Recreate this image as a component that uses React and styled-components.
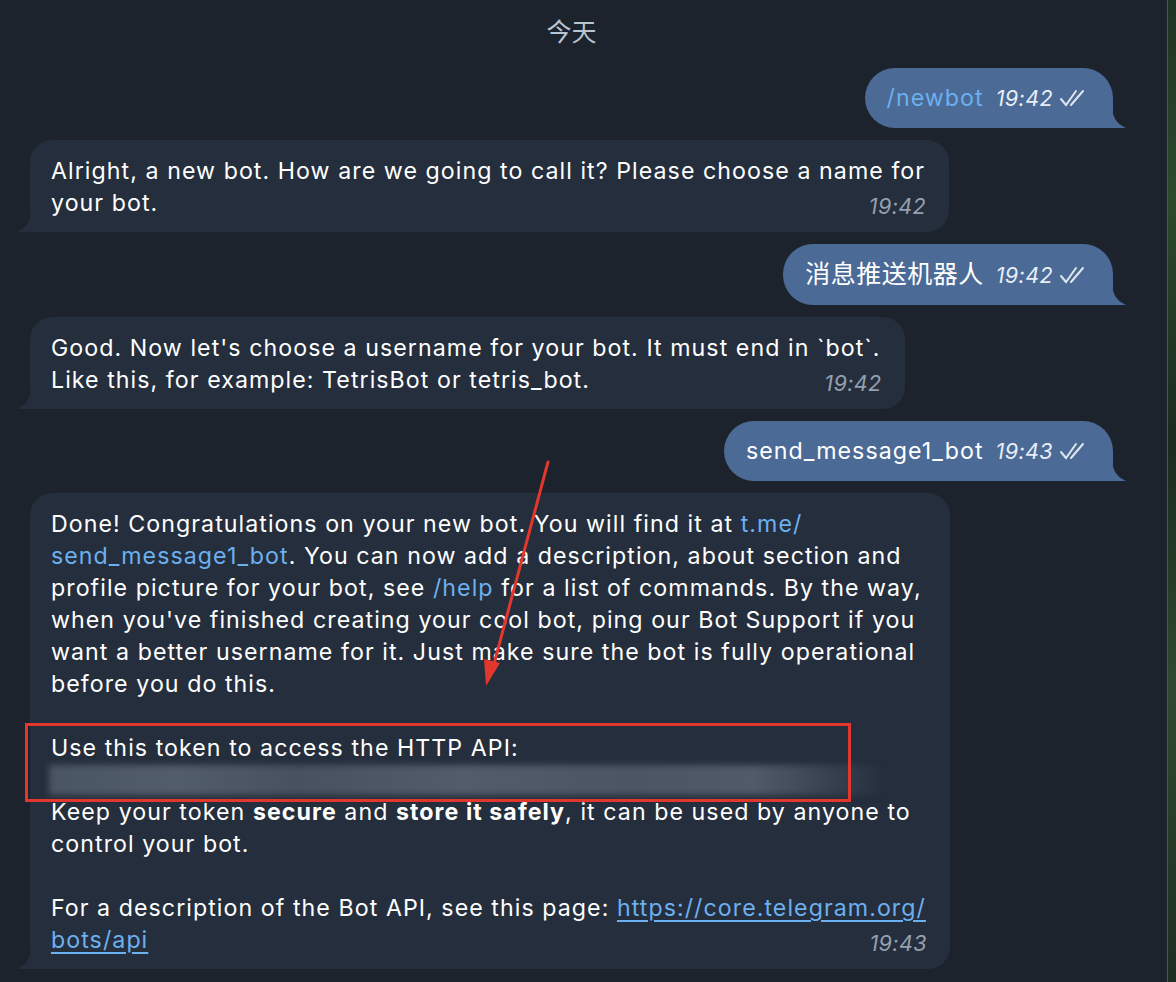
import React from 'react';
import styled, { createGlobalStyle } from 'styled-components';

const GlobalStyle = createGlobalStyle`
   html, body {
      margin: 0;
      padding: 0;
      background: #1d232d;
   }
   body {
      font-family: Inter, "Noto Sans CJK SC", sans-serif;
      -webkit-font-smoothing: antialiased;
   }
`;

const Page = styled.div`
   position: relative;
   display: flex;
   width: 1176px;
   height: 982px;
   overflow: hidden;
   background: #1d232d;
`;

const Chat = styled.div`
   flex: 1;
   display: flex;
   flex-direction: column;
   padding: 14px 54px 0 30px;
   gap: 12px;
`;

const Wallpaper = styled.div`
   width: 8px;
   border-left: 1px solid #4c5561;
   background: linear-gradient(180deg, #1f3323 0%, #2c4a2c 20%, #1a2b1f 45%, #2f4a30 70%, #1d2e22 100%);
`;

const DateLabel = styled.div`
   align-self: center;
   color: #b9c4d1;
   font-size: 25px;
   line-height: 36px;
   margin-bottom: 6px;
`;

const Bubble = styled.div`
   position: relative;
   display: flex;
   font-size: 23.2px;
   letter-spacing: 1.05px;
   line-height: 32px;
   color: #fff;
   ${({ $out }) =>
      $out
         ? `
      align-self: flex-end;
      flex-direction: row;
      align-items: baseline;
      gap: 12px;
      background: #4b6a96;
      border-radius: 30px 30px 0 30px;
      padding: 14px 24px 14px 22px;
   `
         : `
      align-self: flex-start;
      flex-direction: column;
      background: #252e3c;
      border-radius: 22px 22px 22px 0;
      padding: 15px 24px 13px 21px;
   `}
`;

const Tail = styled.svg`
   position: absolute;
   bottom: 0;
   ${({ $out }) => ($out ? 'right: -13px;' : 'left: -13px;')}
`;

const Text = styled.div`
   white-space: nowrap;
   font-size: ${({ $cjk }) => ($cjk ? '25px' : 'inherit')};
   letter-spacing: ${({ $cjk }) => ($cjk ? '0.5px' : 'inherit')};
`;

const Link = styled.span`
   color: #6cb0ef;
   text-decoration: ${({ $underline }) => ($underline ? 'underline' : 'none')};
   text-underline-offset: 4px;
   text-decoration-thickness: 1.5px;
`;

const Bold = styled.b`
   font-weight: 700;
`;

const Meta = styled.div`
   display: flex;
   align-items: center;
   gap: 6px;
   height: 32px;
   font-size: 21.5px;
   letter-spacing: 0.4px;
   font-style: italic;
   color: ${({ $out }) => ($out ? '#e8eef6' : '#94a0b0')};
   ${({ $out }) =>
      !$out &&
      `
      align-self: flex-end;
      margin-top: -32px;
      margin-right: -1px;
      transform: translateY(3px);
   `}
`;

const Blank = styled.div`
   height: 32px;
`;

const Token = styled.div`
   height: 30px;
   width: 830px;
   margin: 1px 0 1px -2px;
   background: linear-gradient(90deg, #4a5563 0%, #525d6b 15%, #47515f 30%, #525c6a 50%, #4b5563 70%, #505a68 85%, #283140 100%);
   filter: blur(3px);
`;

const Overlay = styled.svg`
   position: absolute;
   left: 0;
   top: 0;
   pointer-events: none;
`;

const Checks = () => (
   <svg width="30" height="20" viewBox="0 0 30 20" fill="none" stroke="#dfe6ef" strokeWidth="2" strokeLinecap="round">
      <path d="M2 11 L7 17 L17 3" />
      <path d="M12 17 L24 3" />
   </svg>
);

const BubbleTail = ({ out }) => (
   <Tail $out={out} width="14" height="22" viewBox="0 0 14 22">
      {out ? (
         <path d="M0 0 C0 11 5 18 14 22 L0 22 Z" fill="#4b6a96" />
      ) : (
         <path d="M14 0 C14 11 9 18 0 22 L14 22 Z" fill="#252e3c" />
      )}
   </Tail>
);

const Outgoing = ({ text, time, link, cjk }) => (
   <Bubble $out>
      <Text $cjk={cjk}>{link ? <Link>{text}</Link> : text}</Text>
      <Meta $out>
         {time}
         <Checks />
      </Meta>
      <BubbleTail out />
   </Bubble>
);

const Incoming = ({ children, time }) => (
   <Bubble>
      <Text>{children}</Text>
      <Meta>{time}</Meta>
      <BubbleTail />
   </Bubble>
);

export default function App() {
   return (
      <Page>
         <GlobalStyle />
         <Chat>
            <DateLabel>今天</DateLabel>
            <Outgoing text="/newbot" time="19:42" link />
            <Incoming time="19:42">
               Alright, a new bot. How are we going to call it? Please choose a name for
               <br />
               your bot.
            </Incoming>
            <Outgoing text="消息推送机器人" time="19:42" cjk />
            <Incoming time="19:42">
               Good. Now let's choose a username for your bot. It must end in `bot`.
               <br />
               Like this, for example: TetrisBot or tetris_bot.
            </Incoming>
            <Outgoing text="send_message1_bot" time="19:43" />
            <Incoming time="19:43">
               Done! Congratulations on your new bot. You will find it at <Link>t.me/</Link>
               <br />
               <Link>send_message1_bot</Link>. You can now add a description, about section and
               <br />
               profile picture for your bot, see <Link>/help</Link> for a list of commands. By the way,
               <br />
               when you've finished creating your cool bot, ping our Bot Support if you
               <br />
               want a better username for it. Just make sure the bot is fully operational
               <br />
               before you do this.
               <Blank />
               Use this token to access the HTTP API:
               <Token />
               Keep your token <Bold>secure</Bold> and <Bold>store it safely</Bold>, it can be used by anyone to
               <br />
               control your bot.
               <Blank />
               For a description of the Bot API, see this page: <Link $underline>https://core.telegram.org/</Link>
               <br />
               <Link $underline>bots/api</Link>
            </Incoming>
         </Chat>
         <Wallpaper />
         <Overlay width="1176" height="982" viewBox="0 0 1176 982">
            <rect x="26.5" y="724.5" width="823" height="76" fill="none" stroke="#e1372c" strokeWidth="3" />
            <line x1="548" y1="462" x2="494" y2="664" stroke="#e1372c" strokeWidth="3" strokeLinecap="round" />
            <path d="M486 686 L484 659 L500 663 Z" fill="#e1372c" />
         </Overlay>
      </Page>
   );
}
